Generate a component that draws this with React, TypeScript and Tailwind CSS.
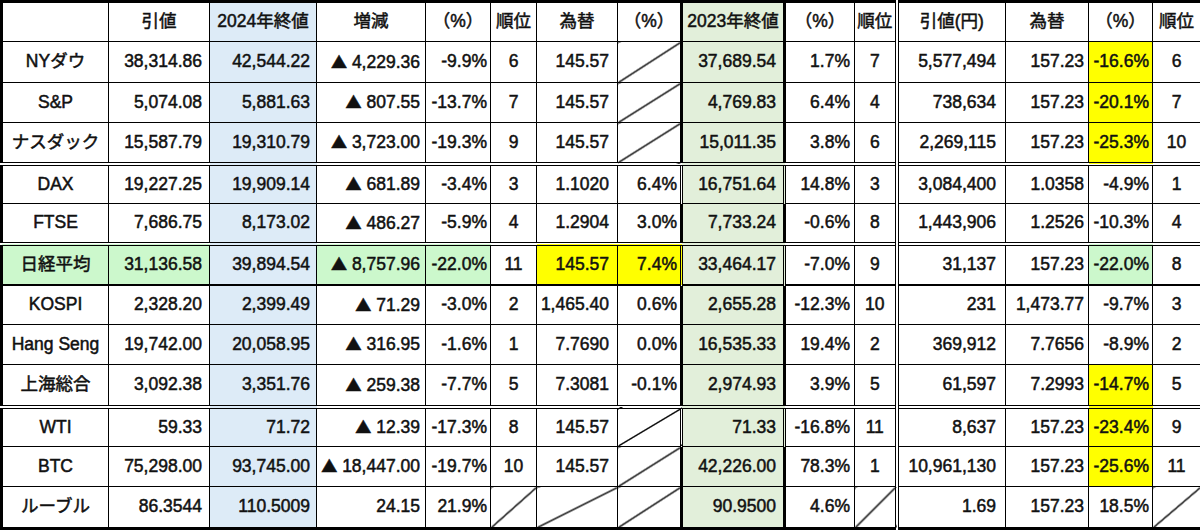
type Cell = string | null; // null = diagonal (empty, struck through)

type Row = {
  cells: Cell[];
  sep?: "double" | "thick";
  nikkei?: boolean;
  yellow?: number[];
  h: string;
};

const widths = [107, 101, 107, 109, 65, 46, 81, 64, 103, 70, 42, 109, 83, 64, 49];

const headers = [
  "",
  "引値",
  "2024年終値",
  "増減",
  "（%）",
  "順位",
  "為替",
  "（%）",
  "2023年終値",
  "（%）",
  "順位",
  "引値(円)",
  "為替",
  "（%）",
  "順位",
];

const rows: Row[] = [
  { h: "h-[41px]", cells: ["NYダウ", "38,314.86", "42,544.22", "▲ 4,229.36", "-9.9%", "6", "145.57", null, "37,689.54", "1.7%", "7", "5,577,494", "157.23", "-16.6%", "6"], yellow: [13] },
  { h: "h-[40px]", cells: ["S&P", "5,074.08", "5,881.63", "▲ 807.55", "-13.7%", "7", "145.57", null, "4,769.83", "6.4%", "4", "738,634", "157.23", "-20.1%", "7"], yellow: [13] },
  { h: "h-[41px]", cells: ["ナスダック", "15,587.79", "19,310.79", "▲ 3,723.00", "-19.3%", "9", "145.57", null, "15,011.35", "3.8%", "6", "2,269,115", "157.23", "-25.3%", "10"], yellow: [13] },
  { h: "h-[40px]", sep: "double", cells: ["DAX", "19,227.25", "19,909.14", "▲ 681.89", "-3.4%", "3", "1.1020", "6.4%", "16,751.64", "14.8%", "3", "3,084,400", "1.0358", "-4.9%", "1"] },
  { h: "h-[40px]", cells: ["FTSE", "7,686.75", "8,173.02", "▲ 486.27", "-5.9%", "4", "1.2904", "3.0%", "7,733.24", "-0.6%", "8", "1,443,906", "1.2526", "-10.3%", "4"] },
  { h: "h-[41px]", sep: "double", nikkei: true, cells: ["日経平均", "31,136.58", "39,894.54", "▲ 8,757.96", "-22.0%", "11", "145.57", "7.4%", "33,464.17", "-7.0%", "9", "31,137", "157.23", "-22.0%", "8"], yellow: [6, 7] },
  { h: "h-[40px]", sep: "thick", cells: ["KOSPI", "2,328.20", "2,399.49", "▲ 71.29", "-3.0%", "2", "1,465.40", "0.6%", "2,655.28", "-12.3%", "10", "231", "1,473.77", "-9.7%", "3"] },
  { h: "h-[40px]", cells: ["Hang Seng", "19,742.00", "20,058.95", "▲ 316.95", "-1.6%", "1", "7.7690", "0.0%", "16,535.33", "19.4%", "2", "369,912", "7.7656", "-8.9%", "2"] },
  { h: "h-[42px]", cells: ["上海総合", "3,092.38", "3,351.76", "▲ 259.38", "-7.7%", "5", "7.3081", "-0.1%", "2,974.93", "3.9%", "5", "61,597", "7.2993", "-14.7%", "5"], yellow: [13] },
  { h: "h-[40px]", sep: "double", cells: ["WTI", "59.33", "71.72", "▲ 12.39", "-17.3%", "8", "145.57", null, "71.33", "-16.8%", "11", "8,637", "157.23", "-23.4%", "9"], yellow: [13] },
  { h: "h-[40px]", cells: ["BTC", "75,298.00", "93,745.00", "▲ 18,447.00", "-19.7%", "10", "145.57", null, "42,226.00", "78.3%", "1", "10,961,130", "157.23", "-25.6%", "11"], yellow: [13] },
  { h: "h-[42px]", cells: ["ルーブル", "86.3544", "110.5009", "24.15", "21.9%", null, null, null, "90.9500", "4.6%", null, "1.69", "157.23", "18.5%", null] },
];

// per-column alignment / padding
const colText = [
  "text-center",
  "text-right pr-[7px]",
  "text-right pr-[6px]",
  "text-right pr-[5px]",
  "text-right pr-[3px]",
  "text-center",
  "text-right pr-[8px]",
  "text-right pr-[3px]",
  "text-right pr-[7px]",
  "text-right pr-[4px]",
  "text-center",
  "text-right pr-[9px]",
  "text-right pr-[4px]",
  "text-right pr-[3px]",
  "text-center",
];

// vertical rules that are heavier than the grid
const colRule = [
  "",
  "",
  "",
  "",
  "",
  "",
  "",
  "border-r-[3px]",
  "border-r-[3px]",
  "",
  "border-double border-r-4",
  "",
  "",
  "",
  "",
];

const diag =
  "bg-[linear-gradient(to_bottom_right,transparent_calc(50%_-_1px),#111_calc(50%_-_0.5px),#111_calc(50%_+_0.5px),transparent_calc(50%_+_1px))]";

const nikkeiGreen = [0, 1, 3, 4, 13];

function bgFor(row: Row | null, c: number): string {
  if (row && row.yellow?.includes(c)) return "bg-[#ffff00]";
  if (row && row.nikkei && nikkeiGreen.includes(c)) return "bg-[#ccf8cc]";
  if (c === 2) return "bg-[#ddebf7]";
  if (c === 8) return "bg-[#e2efda]";
  return "bg-white";
}

function sepFor(row: Row): string {
  if (row.sep === "double") return "border-double border-t-4";
  if (row.sep === "thick") return "border-t-2";
  return "";
}

function Value({ v }: { v: string }) {
  if (v.startsWith("▲ ")) {
    return (
      <>
        <span className="font-['Noto_Sans_CJK_JP'] text-[16px]">▲</span> {v.slice(2)}
      </>
    );
  }
  return <>{v}</>;
}

export default function App() {
  return (
    <div className="w-[1200px] h-[530px] bg-white overflow-hidden">
      <table
        className="w-[1200px] table-fixed border-collapse border-[3px] border-black text-[17.5px] leading-none text-[#111] [-webkit-text-stroke:0.5px_#111]"
        style={{ fontFamily: '"Liberation Sans", "Noto Sans CJK JP", sans-serif' }}
      >
        <colgroup>
          {widths.map((w, i) => (
            <col key={i} style={{ width: w }} />
          ))}
        </colgroup>
        <thead>
          <tr className="h-[40px]">
            {headers.map((t, c) => (
              <th
                key={c}
                className={`border border-black font-normal text-center ${bgFor(null, c)} ${colRule[c]}`}
              >
                {t}
              </th>
            ))}
          </tr>
        </thead>
        <tbody>
          {rows.map((row, r) => (
            <tr key={r} className={row.h}>
              {row.cells.map((v, c) => (
                <td
                  key={c}
                  className={`border border-black whitespace-nowrap ${colText[c]} ${
                    v === null ? diag : bgFor(row, c)
                  } ${colRule[c]} ${sepFor(row)}`}
                >
                  {v !== null && <Value v={v} />}
                </td>
              ))}
            </tr>
          ))}
        </tbody>
      </table>
    </div>
  );
}
